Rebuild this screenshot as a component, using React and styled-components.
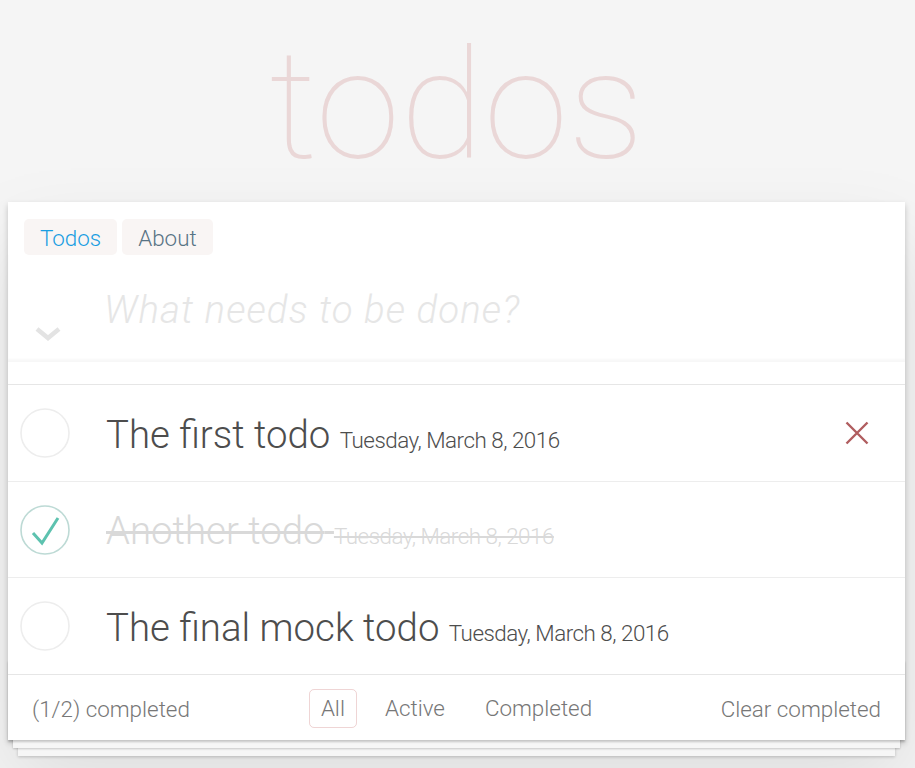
import React from "react";
import styled, { createGlobalStyle } from "styled-components";

const GlobalStyle = createGlobalStyle`
  html, body {
    margin: 0;
    padding: 0;
  }
  body {
    background: #f5f5f5;
    font-family: Roboto, "Helvetica Neue", "Liberation Sans", Arial, sans-serif;
    font-weight: 300;
    color: #4d4d4d;
    -webkit-font-smoothing: antialiased;
  }
  * { box-sizing: border-box; }
`;

const Page = styled.div`
  padding: 0 10px 40px 8px;
`;

const Title = styled.h1`
  margin: 0;
  height: 202px;
  padding-top: 29px;
  text-align: center;
  font-size: 153px;
  line-height: 153px;
  font-weight: 100;
  color: rgba(175, 47, 47, 0.15);
`;

const Card = styled.section`
  position: relative;
  background: #fff;
  box-shadow: 0 3px 6px rgba(0, 0, 0, 0.2), 0 40px 80px 0 rgba(0, 0, 0, 0.1);
`;

const Tabs = styled.nav`
  display: flex;
  gap: 5px;
  padding: 17px 16px 0 16px;
`;

const Tab = styled.button`
  height: 36px;
  padding: 2px 16px 0;
  border: none;
  border-radius: 5px;
  background: #f9f5f4;
  font-family: inherit;
  font-weight: 300;
  font-size: 22.4px;
  color: ${(p) => (p.$active ? "#1a9ee2" : "#587384")};
  cursor: pointer;
`;

const InputRow = styled.div`
  display: flex;
  height: 107px;
  box-shadow: inset 0 -3px 2px rgba(0, 0, 0, 0.03);
`;

const ToggleCell = styled.div`
  width: 96px;
  flex: none;
  display: flex;
  align-items: flex-end;
  padding: 0 0 20px 27px;
`;

const NewTodo = styled.input`
  flex: 1;
  min-width: 0;
  border: none;
  outline: none;
  background: transparent;
  padding: 26px 26px 24px 0;
  font-family: inherit;
  font-weight: 300;
  font-size: 38.4px;
  line-height: 1.4em;
  color: #4d4d4d;
  &::placeholder {
    font-style: italic;
    font-weight: 300;
    letter-spacing: 1.1px;
    color: #e6e6e6;
  }
`;

const List = styled.ul`
  list-style: none;
  margin: 22px 0 0;
  padding: 0;
  border-top: 1px solid #e6e6e6;
`;

const Item = styled.li`
  display: flex;
  align-items: center;
  height: ${(p) => (p.$first ? 97 : 96)}px;
  border-bottom: 1px solid #ededed;
  &:last-child {
    border-bottom: none;
  }
`;

const CheckCell = styled.div`
  width: 96px;
  flex: none;
  display: flex;
  align-items: center;
  padding-left: 12px;
`;

const Label = styled.label`
  flex: 1;
  padding: 4px 0 0 2px;
  font-size: 38.4px;
  line-height: 1.2;
  white-space: nowrap;
  color: ${(p) => (p.$done ? "#d9d9d9" : "#4d4d4d")};
  text-decoration: ${(p) => (p.$done ? "line-through" : "none")};
  text-decoration-thickness: 3px;
`;

const DateText = styled.span`
  display: inline-block;
  font-size: 22.4px;
  letter-spacing: -0.5px;
  text-decoration: ${(p) => (p.$done ? "line-through" : "none")};
  text-decoration-thickness: 2px;
`;

const Destroy = styled.button`
  width: 64px;
  height: 64px;
  margin-right: 16px;
  flex: none;
  border: none;
  background: transparent;
  padding: 0;
  display: flex;
  align-items: center;
  justify-content: center;
  visibility: ${(p) => (p.$shown ? "visible" : "hidden")};
`;

const Footer = styled.footer`
  position: relative;
  display: grid;
  grid-template-columns: 1fr auto 1fr;
  align-items: center;
  height: 66px;
  padding: 17px 24px 15px;
  border-top: 1px solid #e6e6e6;
  color: #777;
  font-size: 22.4px;
  line-height: 32px;
  &::before {
    content: "";
    position: absolute;
    left: 0;
    right: 0;
    bottom: 0;
    height: 80px;
    overflow: hidden;
    box-shadow: 0 2px 2px rgba(0, 0, 0, 0.2), 0 13px 0 -5px #f6f6f6,
      0 14px 2px -5px rgba(0, 0, 0, 0.2), 0 26px 0 -10px #f6f6f6,
      0 27px 3px -10px rgba(0, 0, 0, 0.2);
  }
`;

const Count = styled.span`
  justify-self: start;
`;

const Filters = styled.ul`
  list-style: none;
  display: flex;
  gap: 6px;
  margin: -4px 0 -3px;
  padding: 0;
`;

const FilterLink = styled.a`
  display: block;
  margin: 0 5px;
  padding: 5px 11px;
  line-height: 27px;
  border: 1px solid ${(p) => (p.$selected ? "rgba(175, 47, 47, 0.2)" : "transparent")};
  border-radius: 5px;
  color: inherit;
  text-decoration: none;
`;

const Clear = styled.button`
  justify-self: end;
  border: none;
  background: transparent;
  padding: 0;
  font-family: inherit;
  font-weight: 300;
  font-size: 22.4px;
  line-height: 32px;
  color: #777;
`;

const Circle = ({ done }) => (
  <svg width="50" height="50" viewBox="0 0 50 50">
    <circle
      cx="25"
      cy="25"
      r="24"
      fill="none"
      stroke={done ? "#bddad5" : "#ededed"}
      strokeWidth="1.6"
    />
    {done && (
      <polyline
        points="13,28 22,38 38,13"
        fill="none"
        stroke="#5dc2af"
        strokeWidth="3"
        strokeLinejoin="miter"
      />
    )}
  </svg>
);

const Chevron = () => (
  <svg width="26" height="16" viewBox="0 0 26 16">
    <polyline points="2,3 13,12 24,3" fill="none" stroke="#e3e3e3" strokeWidth="4.5" />
  </svg>
);

const Cross = () => (
  <svg width="24" height="24" viewBox="0 0 24 24">
    <path d="M1.5 1.5 L22.5 22.5 M22.5 1.5 L1.5 22.5" stroke="#b05d5f" strokeWidth="2.4" />
  </svg>
);

const todos = [
  { text: "The first todo", date: "Tuesday, March 8, 2016", done: false, hover: true },
  { text: "Another todo", date: "Tuesday, March 8, 2016", done: true },
  { text: "The final mock todo", date: "Tuesday, March 8, 2016", done: false },
];

export default function App() {
  return (
    <>
      <GlobalStyle />
      <Page>
        <Title>todos</Title>
        <Card>
          <Tabs>
            <Tab $active>Todos</Tab>
            <Tab>About</Tab>
          </Tabs>
          <InputRow>
            <ToggleCell>
              <Chevron />
            </ToggleCell>
            <NewTodo placeholder="What needs to be done?" />
          </InputRow>
          <List>
            {todos.map((t, i) => (
              <Item key={t.text} $first={i === 0}>
                <CheckCell>
                  <Circle done={t.done} />
                </CheckCell>
                <Label $done={t.done}>
                  {t.text} <DateText $done={t.done}>{t.date}</DateText>
                </Label>
                <Destroy $shown={t.hover} aria-label="Delete">
                  <Cross />
                </Destroy>
              </Item>
            ))}
          </List>
          <Footer>
            <Count>(1/2) completed</Count>
            <Filters>
              <li><FilterLink href="#/" $selected>All</FilterLink></li>
              <li><FilterLink href="#/active">Active</FilterLink></li>
              <li><FilterLink href="#/completed">Completed</FilterLink></li>
            </Filters>
            <Clear>Clear completed</Clear>
          </Footer>
        </Card>
      </Page>
    </>
  );
}
